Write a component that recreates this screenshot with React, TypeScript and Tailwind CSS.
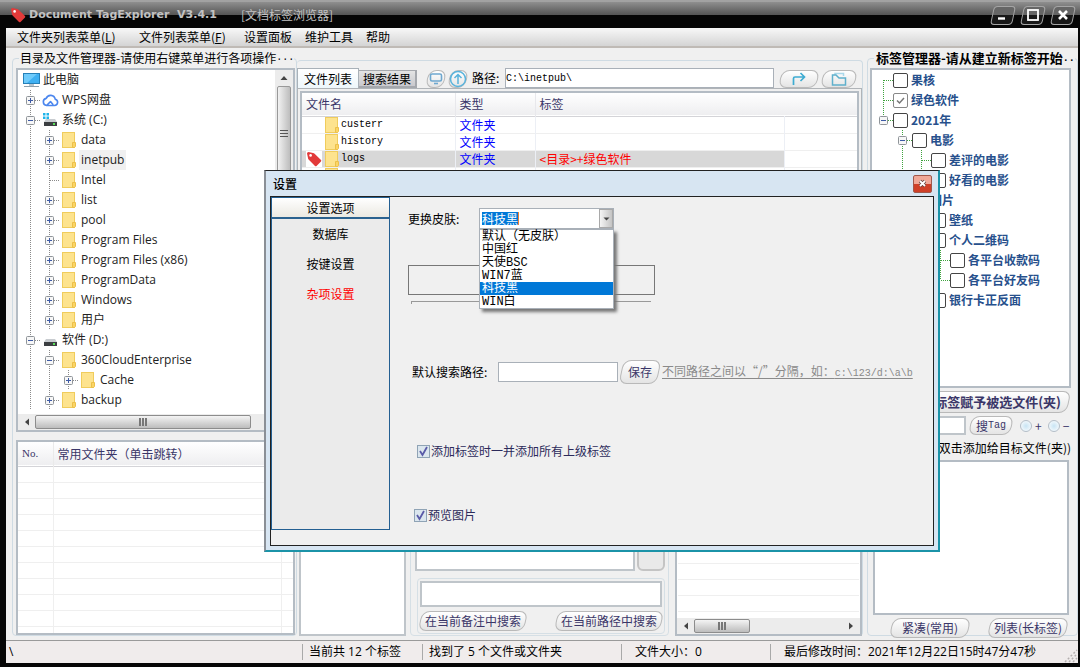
import { useState } from 'react';
import type { ReactNode } from 'react';
import clsx from 'clsx';

// ============================================================================
// Data
// ============================================================================

type IconKind = 'computer' | 'cloud' | 'system' | 'drive' | 'folder';

// Guide cells drawn left of a row:
// line = pass-through, tee = branch, end = last branch, plus / minus = expander
type Guide = 'none' | 'line' | 'tee' | 'end' | 'first' | 'plus' | 'minus' | 'minus-end';

interface TreeNode {
  name: string;
  icon: IconKind;
  guides: Guide[];
  selected?: boolean;
}

interface TagNode {
  name: string;
  guides: Guide[];
  checked?: boolean;
}

const folderTree: TreeNode[] = [
  { name: '此电脑', icon: 'computer', guides: [] },
  { name: 'WPS网盘', icon: 'cloud', guides: ['plus'] },
  { name: '系统 (C:)', icon: 'system', guides: ['minus'] },
  { name: 'data', icon: 'folder', guides: ['line', 'plus'] },
  { name: 'inetpub', icon: 'folder', guides: ['line', 'plus'], selected: true },
  { name: 'Intel', icon: 'folder', guides: ['line', 'tee'] },
  { name: 'list', icon: 'folder', guides: ['line', 'plus'] },
  { name: 'pool', icon: 'folder', guides: ['line', 'plus'] },
  { name: 'Program Files', icon: 'folder', guides: ['line', 'plus'] },
  { name: 'Program Files (x86)', icon: 'folder', guides: ['line', 'plus'] },
  { name: 'ProgramData', icon: 'folder', guides: ['line', 'plus'] },
  { name: 'Windows', icon: 'folder', guides: ['line', 'plus'] },
  { name: '用户', icon: 'folder', guides: ['line', 'plus'] },
  { name: '软件 (D:)', icon: 'drive', guides: ['minus'] },
  { name: '360CloudEnterprise', icon: 'folder', guides: ['line', 'minus'] },
  { name: 'Cache', icon: 'folder', guides: ['line', 'line', 'plus'] },
  { name: 'backup', icon: 'folder', guides: ['line', 'plus'] },
];

const tagTree: TagNode[] = [
  { name: '果核', guides: ['first'] },
  { name: '绿色软件', guides: ['tee'], checked: true },
  { name: '2021年', guides: ['minus-end'] },
  { name: '电影', guides: ['none', 'minus'] },
  { name: '差评的电影', guides: ['none', 'line', 'tee'] },
  { name: '好看的电影', guides: ['none', 'line', 'end'] },
  { name: '图片', guides: ['none', 'minus-end'] },
  { name: '壁纸', guides: ['none', 'none', 'tee'] },
  { name: '个人二维码', guides: ['none', 'none', 'minus'] },
  { name: '各平台收款码', guides: ['none', 'none', 'line', 'tee'] },
  { name: '各平台好友码', guides: ['none', 'none', 'line', 'end'] },
  { name: '银行卡正反面', guides: ['none', 'none', 'end'] },
];

const files = [
  { name: 'custerr', type: '文件夹', tag: '' },
  { name: 'history', type: '文件夹', tag: '' },
  { name: 'logs', type: '文件夹', tag: '<目录>+绿色软件', selected: true },
  { name: 'temp', type: '文件夹', tag: '' },
];

const skins = ['默认（无皮肤）', '中国红', '天使BSC', 'WIN7蓝', '科技黑', 'WIN白'];

// ============================================================================
// Icons
// ============================================================================

function TagIcon({ className }: { className?: string }) {
  return (
    <svg viewBox="0 0 16 16" className={clsx('shrink-0', className)} aria-hidden="true">
      <path d="M1 2.5Q1 1 2.5 1L7 2Q8 2.2 8.6 2.8L15 9Q15.6 9.7 15 10.4L10.5 15Q9.8 15.6 9 15L2.6 8.6Q2.1 8 2 7Z" fill="#e23a3a" />
      <circle cx="4.6" cy="4.4" r="1.3" fill="#fff" />
    </svg>
  );
}

function FolderIcon() {
  return (
    <svg width="14" height="16" viewBox="0 0 14 16" className="shrink-0" aria-hidden="true">
      <rect x="0.5" y="0.5" width="12" height="15" fill="#fde38e" stroke="#f0cc5c" />
      <path d="M10.5 15.5V10.5H13.5V14.5L12.5 15.5Z" fill="#fbd566" stroke="#ecc04a" />
    </svg>
  );
}

function NodeIcon({ kind }: { kind: IconKind }) {
  if (kind === 'folder') return <FolderIcon />;
  if (kind === 'computer') {
    return (
      <svg width="17" height="16" viewBox="0 0 17 16" className="shrink-0" aria-hidden="true">
        <rect x="0.5" y="1.5" width="16" height="10" fill="#3fb0f2" stroke="#2680b8" />
        <path d="M1 2H14L4 11H1Z" fill="#6fcbfb" />
        <path d="M6 12H11V14H6Z" fill="#b8c4cc" />
        <path d="M1 14.5H16" stroke="#8ea0ac" />
      </svg>
    );
  }
  if (kind === 'cloud') {
    return (
      <svg width="17" height="16" viewBox="0 0 17 16" className="shrink-0" fill="none" aria-hidden="true">
        <path d="M4.5 13.5H12.5A3.2 3.2 0 0 0 13.2 7.2A4.7 4.7 0 0 0 4.2 6.4A3.6 3.6 0 0 0 4.5 13.5L8.5 9.6L11.2 12.8" stroke="#4b86ee" strokeWidth="1.6" strokeLinejoin="round" />
      </svg>
    );
  }
  return (
    <svg width="17" height="16" viewBox="0 0 17 16" className="shrink-0" aria-hidden="true">
      {kind === 'system' && (
        <path d="M1 1H3.5V3.5H1ZM4.5 1H7V3.5H4.5ZM1 4.5H3.5V7H1ZM4.5 4.5H7V7H4.5Z" fill="#1fb4ea" />
      )}
      <path d="M4 7H13L15 10H2Z" fill="#c8ccd0" />
      <rect x="2" y="10" width="13" height="4" fill="#3c3f42" />
      <rect x="11" y="11" width="2" height="2" fill="#5be05b" />
    </svg>
  );
}

function GuideCell({ guide, color }: { guide: Guide; color: string }) {
  const expander = guide === 'plus' || guide.startsWith('minus');
  const top = guide !== 'none' && guide !== 'first';
  const bottom = guide === 'line' || guide === 'tee' || guide === 'first' || guide === 'plus' || guide === 'minus';
  const branch = guide !== 'none' && guide !== 'line';

  return (
    <svg width="19" height="20" viewBox="0 0 19 20" className="shrink-0" fill="none" aria-hidden="true">
      <g stroke={color} strokeDasharray="1 1">
        {top && <path d="M9.5 0V10" />}
        {bottom && <path d="M9.5 10V20" />}
        {branch && <path d="M10 10.5H19" />}
      </g>
      {expander && (
        <>
          <rect x="5.5" y="6.5" width="8" height="8" rx="1" fill="#f7f7f7" stroke="#8f9499" />
          <path d={guide === 'plus' ? 'M7 10.5H12M9.5 8V13' : 'M7 10.5H12'} stroke="#3d5aa5" />
        </>
      )}
    </svg>
  );
}

// ============================================================================
// Small controls
// ============================================================================

function SkewButton({ children, className, label }: { children?: ReactNode; className?: string; label?: string }) {
  return (
    <button
      type="button"
      aria-label={label}
      className={clsx(
        'relative isolate flex shrink-0 items-center text-xs text-[#3a3668] whitespace-nowrap',
        'before:absolute before:inset-0 before:-z-10 before:-skew-x-12 before:rounded-lg before:border before:border-[#b9b9b9] before:bg-linear-to-b before:from-white before:to-[#e4e4e4]',
        className
      )}
    >
      {children}
    </button>
  );
}

function HScroll({ thumb, right }: { thumb: string; right?: boolean }) {
  return (
    <div className="flex h-4 shrink-0 items-center bg-[#ececec]">
      <svg width="17" height="16" viewBox="0 0 17 16" className="shrink-0" aria-hidden="true">
        <path d="M11 4.5V11.5L7 8Z" fill="#444" />
      </svg>
      <div className={clsx('flex h-3.5 items-center justify-center gap-px rounded-xs border border-[#8c8c8c] bg-linear-to-b from-[#f4f4f4] to-[#bdbdbd]', thumb)}>
        <span className="h-2 w-0.5 bg-[#777]" />
        <span className="h-2 w-0.5 bg-[#777]" />
        <span className="h-2 w-0.5 bg-[#777]" />
      </div>
      {right && (
        <svg width="18" height="16" viewBox="0 0 18 16" className="ml-auto shrink-0" aria-hidden="true">
          <path d="M7 4.5V11.5L11 8Z" fill="#444" />
        </svg>
      )}
    </div>
  );
}

function BlueCheck({ id, label }: { id: string; label: string }) {
  return (
    <div className="flex h-4 items-center gap-px text-xs text-[#2c2a5a]">
      <span className="relative flex">
        <input id={id} type="checkbox" defaultChecked className="peer size-[13px] appearance-none border border-[#8fa3b5] bg-[#dbe6ee]" />
        <svg width="13" height="13" viewBox="0 0 13 13" fill="none" className="pointer-events-none absolute inset-0 hidden peer-checked:block">
          <path d="M3 6L5.5 10L10 2" stroke="#5a5ba8" strokeWidth="1.8" />
        </svg>
      </span>
      <label htmlFor={id}>{label}</label>
    </div>
  );
}

// ============================================================================
// Window chrome
// ============================================================================

function TitleBar() {
  const box =
    'relative isolate flex h-[19px] w-[22px] items-center justify-center before:absolute before:inset-0 before:-z-10 before:-skew-x-12 before:rounded-sm before:border before:border-[#a5a5a5] before:bg-linear-to-b before:from-[#666] before:from-50% before:to-[#181818] before:to-50%';

  return (
    <header className="flex h-7 shrink-0 items-center border-t-2 border-[#a2a2a2] bg-linear-to-b from-[#8f8f8f] from-0% via-[#555] via-50% to-[#060606] to-50% pr-1.5 pl-2.5 text-[#c2c2c2]">
      <TagIcon className="size-4" />
      <h1 className="ml-[3px] font-['DejaVu_Sans',sans-serif] text-[11px] font-bold whitespace-pre">
        Document TagExplorer  V3.4.1
      </h1>
      <span className="ml-6 text-xs">[文档标签浏览器]</span>
      <div className="ml-auto flex gap-2">
        <button type="button" aria-label="最小化" className={box}>
          <svg width="12" height="12" viewBox="0 0 12 12"><path d="M1 9.5H8" stroke="#fff" strokeWidth="2.4" /></svg>
        </button>
        <button type="button" aria-label="最大化" className={box}>
          <svg width="12" height="12" viewBox="0 0 12 12"><rect x="1" y="1" width="10" height="10" fill="none" stroke="#fff" strokeWidth="1.8" /></svg>
        </button>
        <button type="button" aria-label="关闭" className={box}>
          <svg width="12" height="12" viewBox="0 0 12 12"><path d="M2 2L10 10M10 2L2 10" stroke="#fff" strokeWidth="2.6" /></svg>
        </button>
      </div>
    </header>
  );
}

function MenuBar() {
  return (
    <nav className="flex h-5 shrink-0 items-center border-b-2 border-[#bfbab5] bg-linear-to-b from-[#f8f8f8] to-[#d4d4d4] pl-[11px] text-xs text-black">
      <button type="button" className="w-[122px] text-left">文件夹列表菜单(<u>L</u>)</button>
      <button type="button" className="w-[105px] text-left">文件列表菜单(<u>F</u>)</button>
      <button type="button" className="w-[61px] text-left">设置面板</button>
      <button type="button" className="w-[61px] text-left">维护工具</button>
      <button type="button" className="w-[61px] text-left">帮助</button>
    </nav>
  );
}

function StatusBar() {
  return (
    <footer className="flex h-[23px] shrink-0 items-center border-t border-[#9a9a9a] bg-[#f0ecec] font-['Open_Sans','Noto_Sans_CJK_SC',sans-serif] text-xs text-black">
      <span className="w-[296px] pl-[3px]">\</span>
      <span className="w-[120px] border-l border-[#a9a9a9] pl-1.5">当前共 12 个标签</span>
      <span className="w-[199px] border-l border-[#a9a9a9] pl-1.5">找到了 5 个文件或文件夹</span>
      <span className="w-[149px] border-l border-[#a9a9a9] pl-[13px]">文件大小：0</span>
      <span className="border-l border-[#a9a9a9] pl-[13px]">最后修改时间：2021年12月22日15时47分47秒</span>
      <svg width="14" height="14" viewBox="0 0 14 14" className="mt-auto ml-auto" aria-hidden="true">
        <path d="M1 13L13 1M5 13L13 5M9 13L13 9" stroke="#b5b0b0" strokeWidth="1.5" strokeDasharray="2 2" />
      </svg>
    </footer>
  );
}

// ============================================================================
// Left column
// ============================================================================

function FolderPanel() {
  return (
    <fieldset className="flex w-[285px] min-w-0 shrink-0 flex-col gap-2 rounded-sm border border-[#cfdbe3] pr-px pl-[3px]">
      <legend className="ml-[3px] flex h-5 items-center pl-px text-xs whitespace-nowrap text-black">
        目录及文件管理器-请使用右键菜单进行各项操作
        <span className="font-['Liberation_Mono',monospace] text-[10px]">...</span>
      </legend>

      <div className="flex h-[364px] flex-col border-2 border-[#b4bcc4] bg-white">
        <div className="flex min-h-0 flex-1">
          <ul className="min-w-0 flex-1 overflow-hidden pl-[3px] font-['Open_Sans','Noto_Sans_CJK_SC',sans-serif] text-xs text-[#222]">
            {folderTree.map((node) => (
              <li key={node.name} className="flex h-5 items-center">
                {node.guides.map((guide, i) => (
                  <GuideCell key={i} guide={guide} color="#8a8a8a" />
                ))}
                <span className="flex w-5 shrink-0 justify-center">
                  <NodeIcon kind={node.icon} />
                </span>
                <span className={clsx('px-0.5 leading-5 whitespace-nowrap', node.selected && 'bg-[#f0f0f0]')}>{node.name}</span>
              </li>
            ))}
          </ul>
          <div className="flex w-[18px] flex-col items-center bg-[#ececec]">
            <svg width="14" height="16" viewBox="0 0 14 16" className="shrink-0" aria-hidden="true">
              <path d="M3.5 10H10.5L7 6Z" fill="#444" />
            </svg>
            <div className="flex h-[94px] w-3.5 flex-col items-center justify-center gap-0.5 rounded-xs border border-[#999] bg-linear-to-r from-[#f2f2f2] to-[#bdbdbd]">
              <span className="h-px w-2 bg-[#555]" />
              <span className="h-px w-2 bg-[#555]" />
              <span className="h-px w-2 bg-[#555]" />
            </div>
          </div>
        </div>
        <HScroll thumb="w-[216px]" />
      </div>

      <div className="min-h-0 flex-1 overflow-hidden border-2 border-[#b4bcc4] bg-white">
        <table className="w-full table-fixed text-left text-xs text-[#3a3668]">
          <thead>
            <tr className="h-6 border-b border-[#d4d4d8] bg-linear-to-b from-white to-[#eeeef0]">
              <th className="w-[35px] border-r border-[#eaeaea] pl-1 font-['Liberation_Serif',serif] text-[11px] font-normal">No.</th>
              <th className="pl-1 font-normal">常用文件夹（单击跳转）</th>
              <th className="w-3" />
            </tr>
          </thead>
          <tbody>
            {Array.from({ length: 11 }, (_, i) => (
              <tr key={i} className="h-4 border-b border-[#efefef]">
                <td className="border-r border-[#efefef]" />
                <td className="border-r border-[#efefef]" />
                <td />
              </tr>
            ))}
          </tbody>
        </table>
      </div>
    </fieldset>
  );
}

// ============================================================================
// Middle column
// ============================================================================

function FilePanel() {
  return (
    <div className="flex min-h-0 flex-1 flex-col">
      <div className="flex h-5 shrink-0 items-end">
        <button type="button" className="z-10 h-5 w-[62px] border border-b-0 border-[#a9b1b8] bg-linear-to-b from-white to-[#eef7fb] text-xs text-black">文件列表</button>
        <button type="button" className="h-[18px] w-[58px] border-2 border-t border-l-0 border-[#a5a8ad] bg-linear-to-b from-[#e4e4e4] to-[#c9c9cd] text-xs leading-4 whitespace-nowrap text-black">搜索结果</button>
        <SkewButton label="桌面" className="ml-2.5 size-[18px] justify-center">
          <svg width="14" height="14" viewBox="0 0 14 14" fill="none" stroke="#6fa8cf" strokeWidth="1.6">
            <rect x="1.5" y="2" width="11" height="7" rx="1.5" /><path d="M5 11.5H9" />
          </svg>
        </SkewButton>
        <SkewButton label="上一级" className="ml-1 size-[18px] justify-center">
          <svg width="18" height="18" viewBox="0 0 18 18" fill="none" stroke="#58b3dc" strokeWidth="1.5">
            <circle cx="9" cy="9" r="7.5" /><path d="M9 14V5M5.5 8L9 4.5L12.5 8" />
          </svg>
        </SkewButton>
        <label htmlFor="path" className="ml-[5px] w-[33px] text-xs leading-5 whitespace-nowrap text-black">路径:</label>
        <input id="path" type="text" defaultValue={'C:\\inetpub\\'} className="h-5 min-w-0 flex-1 border border-[#a9b0b8] bg-white font-['Liberation_Mono',monospace] text-[10px] text-black outline-none" />
        <SkewButton label="转到" className="mr-1 ml-1.5 h-[18px] w-[38px] justify-center">
          <svg width="14" height="14" viewBox="0 0 14 14" fill="none" stroke="#3eacd2" strokeWidth="1.7">
            <path d="M1.5 13V6.5Q1.5 5 3 5H12M8.5 1L12.5 5L8.5 9" />
          </svg>
        </SkewButton>
        <SkewButton label="打开文件夹" className="mr-1.5 h-[18px] w-[34px] justify-center">
          <svg width="16" height="15" viewBox="0 0 16 15" fill="none" strokeWidth="1.5">
            <path d="M4 3V1.5H12.5V4" stroke="#a9d8ea" /><path d="M1.5 13V3H5L8 6H14.5V13Z" stroke="#5fb0cc" />
          </svg>
        </SkewButton>
      </div>

      <div className="min-h-0 flex-1 border border-[#b0b4b8] bg-[#f0f0f0] p-0.5">
        <div className="h-full overflow-hidden border-2 border-[#b4bcc4] bg-white">
          <table className="w-full table-fixed text-left text-xs">
            <thead>
              <tr className="h-[23px] border-b border-[#d4d4d8] bg-linear-to-b from-white to-[#eeeef0] text-[#3a3668]">
                <th className="w-[153px] border-r border-[#e8e8ec] pl-1 font-normal">文件名</th>
                <th className="w-[80px] border-r border-[#e8e8ec] pl-1 font-normal">类型</th>
                <th className="w-[249px] pl-1 font-normal">标签</th>
                <th />
              </tr>
            </thead>
            <tbody>
              {files.map((file) => (
                <tr key={file.name} className="h-[17px] border-b border-[#efefef] leading-4">
                  <td className={clsx('border-r border-[#eceff5]', file.selected && 'bg-[#d8d8d8]')}>
                    <div className="flex h-4 items-center">
                      <span className="flex w-[23px] justify-center">{file.selected && <TagIcon className="size-4 bg-white" />}</span>
                      <FolderIcon />
                      <span className="pl-0.5 font-['Liberation_Mono',monospace] text-[10px] text-black">{file.name}</span>
                    </div>
                  </td>
                  <td className={clsx('border-r border-[#eceff5] pl-1 text-[#0000ff]', file.selected && 'bg-[#d8d8d8]')}>{file.type}</td>
                  <td className={clsx('border-r border-[#eceff5] pl-1 text-[#ff0000]', file.selected && 'bg-[#d8d8d8]')}>{file.tag}</td>
                  <td />
                </tr>
              ))}
            </tbody>
          </table>
        </div>
      </div>
    </div>
  );
}

function DetailPanels() {
  return (
    <div className="flex h-40 shrink-0 pl-0.5">
      <div className="w-[107px] shrink-0 border-2 border-[#bfc5ca] bg-white" />

      <div className="ml-1 flex w-[259px] shrink-0 flex-col rounded-sm border border-[#d5dfe5] pr-[3px] pl-1 pb-px">
        <div className="flex min-h-0 flex-1 gap-0.5">
          <textarea aria-label="备注" className="min-w-0 flex-1 resize-none border-2 border-[#bfc5ca] bg-white outline-none" />
          <button type="button" aria-label="保存备注" className="w-7 rounded-md border-2 border-[#c4c4c4] bg-[#e9e9e9]" />
        </div>
        <div className="mt-[7px] ml-0.5 flex flex-col gap-1 rounded-sm border border-[#d5dfe5] p-0.5">
          <input aria-label="搜索内容" type="text" className="h-[26px] w-full border-2 border-[#bfc5ca] bg-white outline-none" />
          <div className="flex justify-between">
            <SkewButton className="h-5 w-[106px] justify-center">在当前备注中搜索</SkewButton>
            <SkewButton className="h-5 w-[106px] justify-center">在当前路径中搜索</SkewButton>
          </div>
        </div>
      </div>

      <div className="ml-1.5 flex min-w-0 flex-1 flex-col border-2 border-[#b4bcc4] bg-white">
        <div className="flex min-h-0 flex-1 flex-col justify-end overflow-hidden px-px">
          {Array.from({ length: 8 }, (_, i) => (
            <div key={i} className="h-4 shrink-0 border-b border-[#efefef]" />
          ))}
          <div className="h-1.5 shrink-0" />
        </div>
        <HScroll thumb="w-14" right />
      </div>
    </div>
  );
}

// ============================================================================
// Right column
// ============================================================================

function TagPanel() {
  return (
    <fieldset className="flex w-[211px] min-w-0 shrink-0 flex-col rounded-sm border border-[#cfdbe3] px-0.5">
      <legend className="ml-1 flex h-5 items-center pl-0.5 text-[13px] font-bold whitespace-nowrap text-black">
        标签管理器-请从建立新标签开始
        <span className="font-['Liberation_Mono',monospace] text-[10px]">..</span>
      </legend>

      <ul className="mr-1 h-80 shrink-0 overflow-hidden border-2 border-[#b4bcc4] bg-white pl-0.5 text-xs font-bold text-[#27508c]">
        {tagTree.map((tag) => (
          <li key={tag.name} className="flex h-5 items-center">
            {tag.guides.map((guide, i) => (
              <GuideCell key={i} guide={guide} color="#3fa33f" />
            ))}
            <label className="flex items-center gap-[3px] whitespace-nowrap">
              <span className="relative flex">
                <input type="checkbox" defaultChecked={tag.checked} className="peer size-[15px] appearance-none rounded-xs border border-[#444] bg-white checked:border-[#888]" />
                <svg width="15" height="15" viewBox="0 0 15 15" fill="none" className="pointer-events-none absolute inset-0 hidden peer-checked:block">
                  <path d="M4 7.5L6.5 10L11 5" stroke="#777" strokeWidth="1.5" />
                </svg>
              </span>
              {tag.name}
            </label>
          </li>
        ))}
      </ul>

      <SkewButton className="mt-[3px] mr-1.5 h-[22px] justify-end pr-2 text-[13px] font-bold">将所选标签赋予被选文件(夹)</SkewButton>

      <div className="mt-[3px] flex h-[19px] shrink-0 items-center">
        <input aria-label="标签搜索" type="text" className="h-[19px] w-24 border-2 border-[#bfc5ca] bg-white outline-none" />
        <SkewButton className="mx-1 h-[19px] w-[42px] justify-center">
          搜<span className="font-['Liberation_Mono',monospace] text-[10px]">Tag</span>
        </SkewButton>
        <label className="ml-1 flex items-center gap-[3px] text-xs text-[#3a3668]">
          <input type="radio" name="mode" className="size-3 appearance-none rounded-full border border-[#b4bec8] bg-radial from-[#c8e4f4] to-white" />+
        </label>
        <label className="ml-1.5 flex items-center gap-[3px] text-xs text-[#3a3668]">
          <input type="radio" name="mode" className="size-3 appearance-none rounded-full border border-[#b4bec8] bg-radial from-[#c8e4f4] to-white" />−
        </label>
      </div>

      <p className="mt-[3px] mr-1 flex h-5 shrink-0 items-center justify-end text-xs whitespace-nowrap text-black">常用标签(双击添加给目标文件(夹))</p>

      <div className="mt-0.5 mr-1.5 ml-[3px] min-h-0 flex-1 border-2 border-[#b4bcc4] bg-white" />

      <div className="mt-[3px] mr-2 mb-[-3px] flex shrink-0 justify-end gap-5">
        <SkewButton className="h-5 w-[78px] justify-center">紧凑(常用)</SkewButton>
        <SkewButton className="h-5 w-[78px] justify-center">列表(长标签)</SkewButton>
      </div>
    </fieldset>
  );
}

// ============================================================================
// Settings dialog
// ============================================================================

function SettingsDialog() {
  const [skin, setSkin] = useState('科技黑');

  return (
    <div
      role="dialog"
      aria-label="设置"
      className="absolute top-[170px] left-[264px] z-20 flex h-[382px] w-[676px] flex-col border-2 border-t border-t-[#222] border-r-[#1b93a8] border-b-[#1b93a8] border-l-[#8a8f96] bg-[#d7e5f2] px-1 pb-1"
    >
      <div className="flex h-[25px] shrink-0 items-center justify-between pr-0.5 pl-[3px] text-xs text-black">
        <h2 className="font-medium">设置</h2>
        <button type="button" aria-label="关闭设置" className="flex h-[18px] w-[19px] items-center justify-center rounded-xs border border-[#a0584c] bg-linear-to-b from-[#f0a898] from-50% to-[#cf4028] to-50%">
          <svg width="9" height="9" viewBox="0 0 9 9"><path d="M2 2L7 7M7 2L2 7" stroke="#65423c" strokeWidth="3.4" /><path d="M2 2L7 7M7 2L2 7" stroke="#fff" strokeWidth="1.8" /></svg>
        </button>
      </div>

      <div className="flex min-h-0 flex-1 border border-[#222] bg-[#f0f0f0]">
        <div className="mb-[15px] flex w-[119px] shrink-0 flex-col border border-[#235f92] bg-[#ebebeb] text-xs text-black">
          <button type="button" className="h-[21px] border-b-2 border-[#2b628f] bg-linear-to-b from-white to-[#ebe9e2]">设置选项</button>
          <button type="button" className="h-[30px]">数据库</button>
          <button type="button" className="h-[30px]">按键设置</button>
          <button type="button" className="h-[30px] text-[#ff0000]">杂项设置</button>
        </div>

        <div className="min-w-0 flex-1 pt-[11px] pl-[18px] text-xs text-black">
          <div className="flex h-[21px] items-center">
            <label htmlFor="skin" className="w-[71px]">更换皮肤:</label>
            <div className="relative">
              <select
                id="skin"
                value={skin}
                onChange={(e) => setSkin(e.target.value)}
                className="block h-[21px] w-[135px] appearance-none border border-[#a9b0b8] bg-white bg-[linear-gradient(to_right,#0078d7_36px,#f08030_36px)] bg-[size:37px_13px] bg-[position:2px_3px] bg-no-repeat pl-0.5 text-xs text-white outline-none"
              >
                {skins.map((name) => (
                  <option key={name}>{name}</option>
                ))}
              </select>
              <span className="pointer-events-none absolute top-px right-px flex h-[19px] w-3.5 items-center justify-center border border-[#a9a9a9] bg-linear-to-r from-[#f4f4f4] to-[#c4c4c4]">
                <svg width="7" height="4" viewBox="0 0 7 4"><path d="M0.5 0.5H6.5L3.5 3.5Z" fill="#444" /></svg>
              </span>
              <ul role="listbox" aria-label="皮肤列表" className="absolute top-full left-0 z-10 w-[135px] border border-[#a9b0b8] bg-white font-['Liberation_Mono','Noto_Sans_CJK_SC',monospace] shadow-[3px_3px_3px_#777]">
                {skins.map((name) => (
                  <li
                    key={name}
                    role="option"
                    aria-selected={name === skin}
                    onClick={() => setSkin(name)}
                    className={clsx('h-[13px] pl-0.5 leading-[15px]', name === skin && 'bg-[#0078d7] text-white')}
                  >
                    {name}
                  </li>
                ))}
              </ul>
            </div>
          </div>

          <div className="mt-9 h-[30px] w-[247px] border border-[#777]" />
          <div className="mt-1.5 ml-[3px] h-[3px] w-60 border-t border-l border-[#999]" />

          <div className="mt-14 flex h-6 items-center pl-1">
            <label htmlFor="search-path" className="w-[86px] whitespace-nowrap">默认搜索路径:</label>
            <input id="search-path" type="text" className="h-5 w-[120px] border border-[#a9b0b8] bg-white px-1 outline-none" />
            <SkewButton className="ml-[3px] h-6 w-[38px] justify-center">保存</SkewButton>
            <span className="ml-[3px] whitespace-nowrap text-[#8a8a8a] underline underline-offset-2">
              不同路径之间以“/”分隔，如：
              <span className="font-['Liberation_Mono',monospace] text-[10px]">{'c:\\123/d:\\a\\b'}</span>
            </span>
          </div>

          <div className="mt-[59px] pl-[9px]">
            <BlueCheck id="parent-tags" label="添加标签时一并添加所有上级标签" />
          </div>
          <div className="mt-12 pl-1.5">
            <BlueCheck id="preview" label="预览图片" />
          </div>
        </div>
      </div>
    </div>
  );
}

// ============================================================================
// App
// ============================================================================

export default function App() {
  return (
    <div className="relative flex h-screen flex-col overflow-hidden bg-[#060606] font-['Noto_Sans_CJK_SC',sans-serif]">
      <TitleBar />
      <div className="flex min-h-0 flex-1 flex-col border-r-2 border-b-4 border-l-[6px] border-[#060606] bg-[#f0f0f0]">
        <MenuBar />
        <main className="flex min-h-0 flex-1 pb-1 pl-1.5">
          <FolderPanel />
          <section className="mr-1 flex min-w-0 flex-1 flex-col pt-3">
            <div className="flex min-h-0 flex-1 flex-col rounded-sm border-t border-r border-[#cfdbe3] pt-[7px]">
              <FilePanel />
              <div className="h-2 shrink-0" />
              <DetailPanels />
            </div>
          </section>
          <TagPanel />
        </main>
        <StatusBar />
      </div>
      <SettingsDialog />
    </div>
  );
}
